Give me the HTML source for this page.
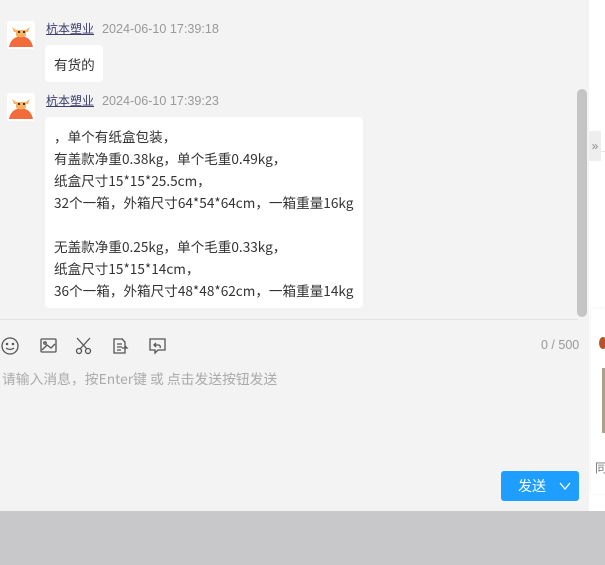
<!DOCTYPE html>
<html><head><meta charset="utf-8"><style>
*{margin:0;padding:0;box-sizing:border-box}
body{width:605px;height:565px;overflow:hidden;background:#f3f3f3;font-family:"Liberation Sans","Noto Sans CJK SC",sans-serif;position:relative}
.a{position:absolute}
.name{font-size:12px;line-height:16px;color:#3a3f6e;text-decoration:underline;text-decoration-color:#3a3f6e;font-family:"Noto Sans CJK SC",sans-serif}
.time{font-size:12.6px;line-height:16px;color:#999}
.bub{background:#fff;border-radius:4px}
.t{font-size:13.6px;line-height:18px;color:#333;white-space:nowrap;font-family:"Noto Sans CJK SC",sans-serif}
</style></head><body>
<div class="a" style="left:589px;top:0;width:16px;height:511px;background:#fff"></div>
<div class="a" style="left:589px;top:131px;width:12px;height:30px;background:#eee;font-size:12px;color:#888;line-height:30px;text-align:center">»</div>
<div class="a" style="left:601px;top:151px;width:4px;height:1px;background:#e5e5e5"></div>
<div class="a" style="left:591px;top:309px;width:14px;height:185px;background:#fff;box-shadow:0 0 3px rgba(0,0,0,.08)"></div>
<div class="a" style="left:599px;top:337px;width:8px;height:12px;border-radius:50%;background:#b5542a"></div>
<div class="a" style="left:602px;top:368px;width:3px;height:65px;background:#b0a08a"></div>
<div class="a" style="left:595px;top:459px;font-size:12px;color:#777">同</div>
<div class="a" style="left:0;top:511px;width:605px;height:54px;background:#c8c7c9"></div>

<svg class="a" style="left:7px;top:21px" width="28" height="28" viewBox="0 0 28 28"><rect width="28" height="28" rx="3" fill="#fff"/><path d="M2 26 Q4 16 14 15 Q24 16 26 26Z" fill="#f26b3a"/><path d="M5 6 L9 9 L19 9 L23 6 L21 11 L19 11 L19 15 Q14 18 9 15 L9 11 L7 11Z" fill="#f7b267"/><rect x="11" y="10" width="2" height="2" fill="#5a2a10"/><rect x="16" y="10" width="2" height="2" fill="#5a2a10"/></svg>
<div class="a name" style="left:46px;top:21px">杭本塑业</div>
<div class="a time" style="left:102px;top:21px">2024-06-10 17:39:18</div>
<div class="a bub" style="left:45px;top:45px;width:58px;height:37px"></div>
<div class="a t" style="left:54px;top:55px">有货的</div>

<svg class="a" style="left:7px;top:93px" width="28" height="28" viewBox="0 0 28 28"><rect width="28" height="28" rx="3" fill="#fff"/><path d="M2 26 Q4 16 14 15 Q24 16 26 26Z" fill="#f26b3a"/><path d="M5 6 L9 9 L19 9 L23 6 L21 11 L19 11 L19 15 Q14 18 9 15 L9 11 L7 11Z" fill="#f7b267"/><rect x="11" y="10" width="2" height="2" fill="#5a2a10"/><rect x="16" y="10" width="2" height="2" fill="#5a2a10"/></svg>
<div class="a name" style="left:46px;top:93px">杭本塑业</div>
<div class="a time" style="left:102px;top:93px">2024-06-10 17:39:23</div>
<div class="a bub" style="left:45px;top:117px;width:318px;height:191px"></div>
<div class="a t" style="left:54px;top:127px">，单个有纸盒包装，</div>
<div class="a t" style="left:54px;top:149px">有盖款净重0.38kg，单个毛重0.49kg，</div>
<div class="a t" style="left:54px;top:171px">纸盒尺寸15*15*25.5cm，</div>
<div class="a t" style="left:54px;top:193px">32个一箱，外箱尺寸64*54*64cm，一箱重量16kg</div>
<div class="a t" style="left:54px;top:237px">无盖款净重0.25kg，单个毛重0.33kg，</div>
<div class="a t" style="left:54px;top:259px">纸盒尺寸15*15*14cm，</div>
<div class="a t" style="left:54px;top:281px">36个一箱，外箱尺寸48*48*62cm，一箱重量14kg</div>

<div class="a" style="left:577px;top:89px;width:10px;height:228px;border-radius:5px;background:#c4c4c4"></div>
<div class="a" style="left:0;top:319px;width:578px;height:1px;background:#e2e2e2"></div>

<svg class="a" style="left:0;top:336px" width="170" height="20" viewBox="0 0 170 20" fill="none" stroke="#555" stroke-width="1.3">
<circle cx="10" cy="10" r="8"/><circle cx="7" cy="8" r=".6" fill="#555"/><circle cx="13" cy="8" r=".6" fill="#555"/><path d="M6 12 Q10 15 14 12"/>
<rect x="41" y="3" width="15" height="13" rx="1"/><path d="M42 14 L47 9 L51 12 L55 8"/><circle cx="45" cy="7" r="1.2"/>
<circle cx="79" cy="15" r="2.5"/><circle cx="88" cy="15" r="2.5"/><path d="M77 2 L87 13 M90 2 L80 13"/>
<path d="M123 3 L114 3 L114 17 L125 17 L125 6 L122 3 M117 8 L122 8 M117 11 L122 11 M117 14 L121 14 M122 12 L127 12 L125 10"/>
<path d="M152 3 L165 3 L165 14 L158 14 L155 17 L155 14 L150 14 L150 3 Z M156 7 L154 9 L156 11 M154 9 L159 9 Q161 10 160 12"/>
</svg>
<div class="a" style="left:541px;top:338px;font-size:12.5px;color:#999">0 / 500</div>
<div class="a" style="left:2px;top:369px;font-size:13.8px;line-height:18px;color:#aaa;font-family:'Noto Sans CJK SC',sans-serif">请输入消息，按Enter键 或 点击发送按钮发送</div>

<div class="a" style="left:501px;top:471px;width:78px;height:30px;background:#1e9fff;border-radius:3px;color:#fff;font-size:14px;line-height:30px"><span style="position:absolute;left:17px">发送</span>
<svg style="position:absolute;left:58px;top:10px" width="12" height="10" viewBox="0 0 12 10"><path d="M1 2 L6 8 L11 2" fill="none" stroke="#fff" stroke-width="1.3"/></svg></div>
</body></html>
